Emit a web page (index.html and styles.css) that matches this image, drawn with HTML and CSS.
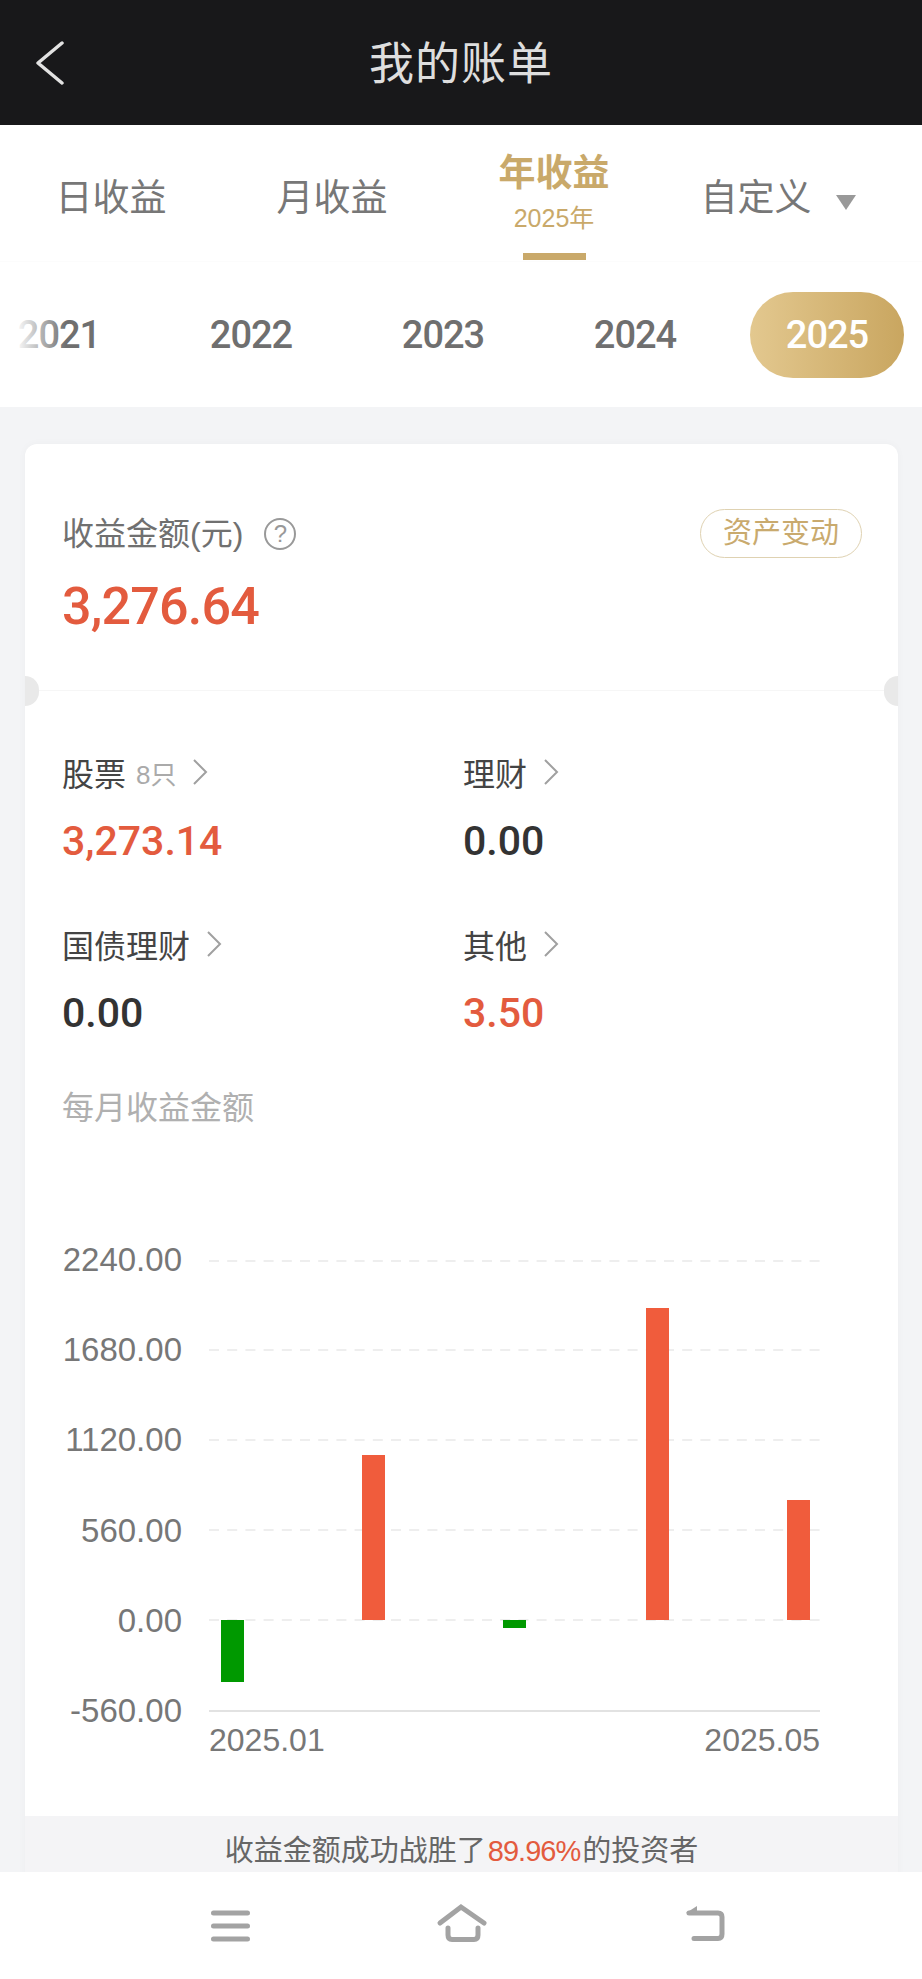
FILE: index.html
```html
<!DOCTYPE html>
<html lang="zh-CN">

<head>
    <meta charset="UTF-8" />
    <meta name="viewport" content="width=device-width, initial-scale=1.0" />
    <title>我的账单</title>
    <link rel="stylesheet" href="styles.css">
</head>

<body>
    <header class="top_bar">
        <svg class="back_icon" width="40" height="50" viewBox="0 0 40 50">
            <polyline points="26,5 2,25 26,45" />
        </svg>
        <h1 class="top_title">我的账单</h1>
    </header>

    <nav class="tabs">
        <div class="tab">日收益</div>
        <div class="tab">月收益</div>
        <div class="tab tab_active">
            <div class="tab_label">年收益</div>
            <div class="tab_sub">2025年</div>
            <div class="tab_line"></div>
        </div>
        <div class="tab tab_custom">自定义<span class="tab_arrow"></span></div>
    </nav>

    <div class="years">
        <div class="year">2021</div>
        <div class="year">2022</div>
        <div class="year">2023</div>
        <div class="year">2024</div>
        <div class="year"><span class="year_pill">2025</span></div>
    </div>

    <main class="content">
        <section class="card">
            <div class="summary">
                <div class="summary_head">
                    <div class="summary_label"><span class="summary_text">收益金额(元)</span><span class="help">?</span></div>
                    <div class="asset_btn">资产变动</div>
                </div>
                <div class="summary_value red">3,276.64</div>
            </div>

            <div class="items">
                <div class="item">
                    <div class="item_label">股票<span class="item_count">8只</span>
                        <svg class="chevron" width="16" height="26" viewBox="0 0 16 26"><polyline points="2,1 14,13 2,25" /></svg>
                    </div>
                    <div class="item_value red">3,273.14</div>
                </div>
                <div class="item">
                    <div class="item_label">理财
                        <svg class="chevron" width="16" height="26" viewBox="0 0 16 26"><polyline points="2,1 14,13 2,25" /></svg>
                    </div>
                    <div class="item_value">0.00</div>
                </div>
                <div class="item">
                    <div class="item_label">国债理财
                        <svg class="chevron" width="16" height="26" viewBox="0 0 16 26"><polyline points="2,1 14,13 2,25" /></svg>
                    </div>
                    <div class="item_value">0.00</div>
                </div>
                <div class="item">
                    <div class="item_label">其他
                        <svg class="chevron" width="16" height="26" viewBox="0 0 16 26"><polyline points="2,1 14,13 2,25" /></svg>
                    </div>
                    <div class="item_value red">3.50</div>
                </div>
            </div>

            <div class="chart_title">每月收益金额</div>

            <div class="chart">
                <div class="y_axis">
                    <span>2240.00</span>
                    <span>1680.00</span>
                    <span>1120.00</span>
                    <span>560.00</span>
                    <span>0.00</span>
                    <span>-560.00</span>
                </div>
                <div class="plot">
                    <svg class="plot_svg" width="611" height="452" viewBox="0 0 611 452">
                        <line class="grid_line" x1="0" x2="611" y1="1" y2="1" />
                        <line class="grid_line" x1="0" x2="611" y1="90" y2="90" />
                        <line class="grid_line" x1="0" x2="611" y1="180" y2="180" />
                        <line class="grid_line" x1="0" x2="611" y1="270" y2="270" />
                        <line class="grid_line" x1="0" x2="611" y1="360" y2="360" />
                        <line class="axis_line" x1="0" x2="611" y1="451" y2="451" />
                        <rect class="bar_down" x="12" y="360" width="23" height="62" />
                        <rect class="bar_up" x="153" y="195" width="23" height="165" />
                        <rect class="bar_down" x="294" y="360" width="23" height="8" />
                        <rect class="bar_up" x="437" y="48" width="23" height="312" />
                        <rect class="bar_up" x="578" y="240" width="23" height="120" />
                    </svg>
                    <div class="x_axis">
                        <span>2025.01</span>
                        <span>2025.05</span>
                    </div>
                </div>
            </div>

            <div class="card_foot">收益金额成功战胜了<span class="foot_rate">89.96%</span>的投资者</div>
        </section>
    </main>

    <footer class="sys_nav">
        <svg class="sys_icon" width="60" height="60" viewBox="0 0 60 60">
            <path d="M13.5 18H47.5M13.5 31H47.5M13.5 44H47.5" />
        </svg>
        <svg class="sys_icon sys_home" width="60" height="60" viewBox="0 0 60 60">
            <path d="M9 28L30 12L53 28" />
            <path d="M17 33V40Q17 44.5 21 44.5H43Q47 44.5 47 40V33" />
        </svg>
        <svg class="sys_icon" width="60" height="60" viewBox="0 0 60 60">
            <path d="M14 18H43Q47 18 47 22V39Q47 43.5 43 43.5H19" />
            <polygon class="sys_fill" points="11,18 22,11 22,20" />
        </svg>
    </footer>
</body>

</html>
```

FILE: styles.css
```css
* {
    box-sizing: border-box;
}

body {
    width: 922px;
    height: 1979px;
    margin: 0;
    display: flex;
    flex-direction: column;
    overflow: hidden;
    background: #fff;
    font-family: "Liberation Sans", "Noto Sans CJK SC", sans-serif;
}

.red {
    color: #e35b3e;
}

/* top bar */
.top_bar {
    height: 125px;
    flex: none;
    display: grid;
    grid-template-columns: 1fr auto 1fr;
    align-items: center;
    background: #18181a;
}

.back_icon {
    margin-left: 36px;
}

.back_icon polyline {
    fill: none;
    stroke: #e2e2e2;
    stroke-width: 3.5;
    stroke-linejoin: round;
    stroke-linecap: round;
}

.top_title {
    grid-column: 2;
    margin: 5px 0 0;
    font-size: 45px;
    font-weight: 400;
    line-height: 60px;
    letter-spacing: 1px;
    color: #dedede;
}

/* tabs */
.tabs {
    height: 137px;
    flex: none;
    display: grid;
    grid-template-columns: 222px 220px 224px 224px;
    padding-top: 56px;
    border-bottom: 1px solid #fcfcfc;
    font-size: 37px;
    line-height: 36px;
    color: #777;
    text-align: center;
}

.tab_active {
    display: flex;
    flex-direction: column;
    align-items: center;
    margin-top: -25px;
    color: #c9a96a;
}

.tab_label {
    font-weight: 700;
    font-size: 37px;
}

.tab_sub {
    margin-top: 12px;
    font-size: 25px;
    line-height: 28px;
}

.tab_line {
    width: 63px;
    height: 7px;
    margin-top: 21px;
    background: #c9a96a;
}

.tab_custom {
    display: flex;
    align-items: center;
    justify-content: center;
    align-self: start;
    gap: 24px;
}

.tab_arrow {
    width: 0;
    height: 0;
    margin-top: 7px;
    border-left: 10px solid transparent;
    border-right: 10px solid transparent;
    border-top: 15px solid #999;
}

/* year picker */
.years {
    height: 145px;
    flex: none;
    position: relative;
    display: flex;
    align-items: center;
    margin-left: -37px;
    font-family: Roboto, "Liberation Sans", sans-serif;
    font-size: 38px;
    font-weight: 500;
    letter-spacing: -1px;
    color: #6f6f6f;
}

.years::before {
    content: "";
    position: absolute;
    left: 37px;
    top: 0;
    width: 66px;
    height: 100%;
    background: linear-gradient(to right, rgba(255, 255, 255, 0.9) 20px, rgba(255, 255, 255, 0));
}

.year {
    width: 192px;
    flex: none;
    display: flex;
    justify-content: center;
}

.year_pill {
    width: 154px;
    height: 86px;
    display: flex;
    align-items: center;
    justify-content: center;
    border-radius: 43px;
    background: linear-gradient(to right, #e3c88f, #c9a660);
    color: #fff;
}

/* card */
.content {
    flex: 1;
    min-height: 0;
    overflow: hidden;
    padding: 37px 24px 0 25px;
    background: #f3f4f6;
}

.card {
    border-radius: 12px 12px 0 0;
    background: #fff;
    box-shadow: 0 0 8px rgba(0, 0, 0, 0.03);
}

.summary {
    position: relative;
    height: 247px;
    padding: 65px 36px 0 37px;
    border-bottom: 1px solid #f6f6f6;
}

.summary::before,
.summary::after {
    content: "";
    position: absolute;
    bottom: -16px;
    width: 14px;
    height: 30px;
    background: #e9e9e9;
}

.summary::before {
    left: 0;
    border-radius: 0 15px 15px 0;
}

.summary::after {
    right: 0;
    border-radius: 15px 0 0 15px;
}

.summary_head {
    height: 49px;
    display: flex;
    align-items: center;
    justify-content: space-between;
}

.summary_label {
    display: flex;
    align-items: center;
    font-size: 32px;
    color: #707070;
}

.summary_text {
    margin-bottom: 6px;
}

.help {
    width: 32px;
    height: 32px;
    margin-left: 21px;
    border: 2px solid #999;
    border-radius: 50%;
    font-size: 24px;
    line-height: 28px;
    text-align: center;
    color: #999;
}

.asset_btn {
    width: 162px;
    height: 49px;
    border: 1px solid #dfd2b2;
    border-radius: 25px;
    font-size: 29px;
    line-height: 47px;
    text-align: center;
    color: #c9aa6e;
}

.summary_value {
    margin-top: 19px;
    font-family: Roboto, "Liberation Sans", sans-serif;
    font-size: 52px;
    font-weight: 500;
    line-height: 60px;
    letter-spacing: -0.8px;
}

.items {
    display: grid;
    grid-template-columns: 401px 1fr;
    row-gap: 58px;
    padding: 61px 37px 0;
}

.item_label {
    display: flex;
    align-items: center;
    height: 40px;
    font-size: 32px;
    color: #444;
}

.item_count {
    margin-left: 10px;
    font-size: 26px;
    color: #aaa;
}

.chevron {
    margin-left: 16px;
}

.chevron polyline {
    fill: none;
    stroke: #a0a0a0;
    stroke-width: 2;
}

.item_value {
    margin-top: 24px;
    font-family: Roboto, "Liberation Sans", sans-serif;
    font-size: 41px;
    font-weight: 500;
    line-height: 50px;
    color: #333;
}

.item_value.red {
    color: #e35b3e;
}

.chart_title {
    margin: 50px 0 0 37px;
    font-size: 32px;
    line-height: 40px;
    color: #b0b0b0;
}

/* chart */
.chart {
    display: flex;
    gap: 27px;
    margin-top: 112px;
    padding-left: 37px;
    font-size: 33px;
    line-height: 40px;
    color: #777;
}

.y_axis {
    width: 120px;
    height: 491px;
    display: flex;
    flex-direction: column;
    justify-content: space-between;
    text-align: right;
}

.plot {
    width: 611px;
    padding-top: 20px;
}

.plot_svg {
    display: block;
}

.grid_line {
    stroke: #eee;
    stroke-width: 2;
    stroke-dasharray: 10 8.2;
}

.axis_line {
    stroke: #e2e2e2;
    stroke-width: 2;
}

.bar_up {
    fill: #f05c3c;
}

.bar_down {
    fill: #009900;
}

.x_axis {
    display: flex;
    justify-content: space-between;
    margin-top: 8px;
    font-size: 32px;
}

.card_foot {
    height: 100px;
    margin-top: 56px;
    padding-top: 17px;
    background: #f4f4f6;
    font-size: 29px;
    line-height: 36px;
    text-align: center;
    color: #666;
}

.foot_rate {
    margin: 0 2px;
    letter-spacing: -1px;
    color: #e35b3e;
}

/* phone nav */
.sys_nav {
    height: 107px;
    flex: none;
    display: flex;
    padding: 23px 0 0 200px;
    background: #fff;
}

.sys_icon path {
    fill: none;
    stroke: #a3a3a3;
    stroke-width: 5;
    stroke-linecap: round;
}

.sys_fill {
    fill: #a3a3a3;
}

.sys_home {
    margin: 0 184px 0 171px;
}
```
